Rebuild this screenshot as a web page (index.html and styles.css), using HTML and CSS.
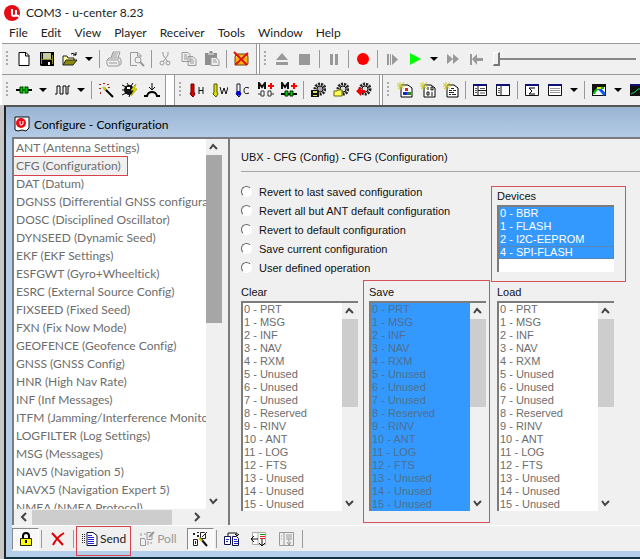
FILE: index.html
```html
<!DOCTYPE html>
<html lang="en">
<head>
    <meta charset="UTF-8">
    <meta name="viewport" content="width=device-width, initial-scale=1.0">
    <title>COM3 - u-center 8.23</title>
    <link rel="stylesheet" href="styles.css">
</head>
<body>
    <header class="titlebar">
        <svg class="icon" viewBox="0 0 16 16"><circle cx="8" cy="8" r="8" fill="#e80c18"/><path d="M8 4v5q0 2 2 2t2-2V5M12 9q0 2 3 2" fill="none" stroke="#fff" stroke-width="2"/></svg>
        <span>COM3 - u-center 8.23</span>
    </header>

    <nav class="menu">
        <a href="#">File</a>
        <a href="#">Edit</a>
        <a href="#">View</a>
        <a href="#">Player</a>
        <a href="#">Receiver</a>
        <a href="#">Tools</a>
        <a href="#">Window</a>
        <a href="#">Help</a>
    </nav>

    <!-- Standard and player toolbars -->
    <div class="toolbars">
        <div class="band">
            <i class="grip"></i>
            <button class="tool" aria-label="New"><svg class="icon" viewBox="0 0 16 16"><path d="M3 1.500h7l3 3v10H3zM9.500 1.500V5H13" fill="#fff" stroke="#000"/></svg></button>
            <button class="tool" aria-label="Save"><svg class="icon" viewBox="0 0 16 16"><path d="M1 1h14v14H2l-1-1z" fill="#000"/><path d="M2 2h1v11H2zM13 4h1v9h-1zM3 8h10v1H3z" fill="#8a8a20"/><path d="M4 2h8v6H4z" fill="#c8c8a0"/><path d="M9 11h2v3H9z" fill="#fff"/></svg></button>
            <button class="tool" aria-label="Open"><svg class="icon" viewBox="0 0 16 16"><path d="M1 14V5h4l1 2h6v2" fill="#ffffa0" stroke="#222"/><path d="M1 14l3-5h11l-4 5z" fill="#8a8a10" stroke="#222"/><path d="M9 3q2-2 5 1M14 1v3h-3" fill="none" stroke="#000"/></svg></button>
            <button class="drop" aria-label="Open recent"></button>
            <i class="sep"></i>
            <button class="tool" aria-label="Print"><svg class="icon" viewBox="0 0 16 16"><path d="M5 7l2-6h7l-2 6M3 7h11l1 2v4l-3 2H2l-1-2V9zM2 9h11M3 12h8M13 14v-4M7 3h5M6 5h5" fill="none" stroke="#999"/></svg></button>
            <button class="tool" aria-label="Print preview"><svg class="icon" viewBox="0 0 16 16"><path d="M8 14.500H1.500v-13H9l3 3V6M8.500 1.500V5H12" fill="none" stroke="#999"/><circle cx="9" cy="9" r="3" fill="none" stroke="#999"/><path d="M11 11l4 4" stroke="#999" stroke-width="2"/></svg></button>
            <i class="sep"></i>
            <button class="tool" aria-label="Cut"><svg class="icon" viewBox="0 0 16 16"><path d="M5 1v3l5 7M10 1v3L5 11" fill="none" stroke="#999"/><circle cx="4" cy="12" r="2" fill="none" stroke="#999"/><circle cx="10" cy="12" r="2" fill="none" stroke="#999"/></svg></button>
            <button class="tool" aria-label="Copy"><svg class="icon" viewBox="0 0 16 16"><path d="M1 1.500h6l2 2v7H1zM7 5.500h5l3 3v6H7zM3 4h3M3 6h3M3 8h3M9 8h3M9 10h4M9 12h4" fill="#eee" stroke="#999"/></svg></button>
            <button class="tool" aria-label="Paste"><svg class="icon" viewBox="0 0 16 16"><path d="M1 2h4l1-2h2l1 2h4v12H1z" fill="#8e8e8e"/><path d="M4 3h6" stroke="#eee"/><path d="M7 6.500h5l3 3v5H7zM9 9h3M9 11h4" fill="#eee" stroke="#999"/></svg></button>
            <i class="sep"></i>
            <button class="tool" aria-label="Empty buffers"><svg class="icon" viewBox="0 0 16 16"><path d="M2 6q0-3 3-3h8q2 0 2 3v6q0 2-2 2H3q-1 0-1-2z" fill="#ffb000" stroke="#642"/><path d="M3 6h11M4 10h9" stroke="#fff080"/><path d="M1 1l13 13M15 2L2 14" stroke="#e01010" stroke-width="2"/></svg></button>
        </div>
        <div class="band band-last">
            <i class="grip"></i>
            <button class="tool" aria-label="Eject"><svg class="icon" viewBox="0 0 16 16"><path d="M8 2l6 7H2zM2 11h12v3H2z" fill="#999"/></svg></button>
            <button class="tool" aria-label="Stop"><svg class="icon" viewBox="0 0 16 16"><path d="M2 3h11v11H2z" fill="#999"/></svg></button>
            <i class="sep"></i>
            <button class="tool" aria-label="Pause"><svg class="icon" viewBox="0 0 16 16"><path d="M4 3h3v11H4zM9 3h3v11H9z" fill="#999"/></svg></button>
            <i class="sep"></i>
            <button class="tool" aria-label="Record"><svg class="icon" viewBox="0 0 16 16"><circle cx="8" cy="8" r="6" fill="#f00"/></svg></button>
            <i class="sep"></i>
            <button class="tool" aria-label="Step"><svg class="icon" viewBox="0 0 16 16"><path d="M3 3h2v11H3zM6 3h1v11H6zM8 3l6 5.500L8 14z" fill="#999"/></svg></button>
            <button class="tool" aria-label="Play"><svg class="icon" viewBox="0 0 16 16"><path d="M3 2l11 6-11 6z" fill="#0f0"/></svg></button>
            <button class="drop" aria-label="Play speed"></button>
            <button class="tool" aria-label="Forward"><svg class="icon" viewBox="0 0 16 16"><path d="M2 3l6 5-6 5zM8 3l6 5-6 5z" fill="#999"/></svg></button>
            <button class="tool" aria-label="Rewind"><svg class="icon" viewBox="0 0 16 16"><path d="M2 3h2v11H2zM4 8l5-5v4h6v3H9v4z" fill="#999"/></svg></button>
            <input class="slider" type="range" min="0" max="100" value="0" aria-label="Position">
        </div>
    </div>

    <!-- Receiver, action and view toolbars -->
    <div class="toolbars">
        <div class="band band-short">
            <i class="grip"></i>
            <button class="tool" aria-label="Connect"><svg class="icon" viewBox="0 0 16 16"><path d="M0 8h16" stroke="#000" stroke-width="2"/><path d="M4 5h3v6H4zM9 5h3v6H9z" fill="#0c0" stroke="#030"/><path d="M8 4v8" stroke="#0c0"/></svg></button>
            <button class="drop" aria-label="Ports"></button>
            <button class="tool" aria-label="Baudrate"><svg class="icon" viewBox="0 0 16 16"><path d="M1 12h2V4h3v8h3V4h3v8h2V4h2" fill="none" stroke="#000"/></svg></button>
            <button class="drop" aria-label="Baudrates"></button>
            <i class="sep"></i>
            <button class="tool" aria-label="Autobaud"><svg class="icon" viewBox="0 0 16 16"><path d="M6 6l9 9" stroke="#000" stroke-width="2"/><path d="M5 5l3 3" stroke="#cc0" stroke-width="2"/><path d="M1 2h2v1H1zM5 1h2v1H5zM9 2h2v1H9zM1 6h2v1H1zM2 10h1v2H2zM10 5h2v1h-2z" fill="#a22"/></svg></button>
            <button class="tool" aria-label="Debug"><svg class="icon" viewBox="0 0 16 16"><path d="M1 3l4 2M1 8h4M1 13l4-2M6 1l2 3M12 1l-2 3M8 15l1-3" stroke="#000"/><ellipse cx="8" cy="8" rx="5" ry="5" fill="#111"/><path d="M6 5h3v2H6z" fill="#fff"/><path d="M15 2l-5 6h3l-3 6 6-7h-3z" fill="#ff0" stroke="#aa0"/></svg></button>
            <button class="tool" aria-label="Antenna"><svg class="icon" viewBox="0 0 16 16"><path d="M8 1v7M5 5l3 3 3-3" fill="none" stroke="#000" stroke-width="1"/><path d="M0 14h3q1-4 5-4t5 4h3" fill="none" stroke="#000" stroke-width="2"/></svg></button>
        </div>
        <div class="band">
            <i class="grip"></i>
            <button class="tool" aria-label="Hotstart"><svg class="icon" viewBox="0 0 16 16"><path d="M2 2h3v8l1 2-2 3-3-3 1-2z" fill="#d00" stroke="#600"/><path d="M10 5v7M14 5v7M10 8.500h4" stroke="#111"/></svg></button>
            <button class="tool" aria-label="Warmstart"><svg class="icon" viewBox="0 0 16 16"><path d="M2 2h3v8l1 2-2 3-3-3 1-2z" fill="#dd0" stroke="#550"/><path d="M8 5l2 7 2-6 2 6 2-7" fill="none" stroke="#111"/></svg></button>
            <button class="tool" aria-label="Coldstart"><svg class="icon" viewBox="0 0 16 16"><path d="M2 2h3v8l1 2-2 3-3-3 1-2z" fill="#fff" stroke="#113"/><path d="M2 9h3l1 3-2 2-3-2z" fill="#00e"/><path d="M14 6q-5-2-5 2.500T14 11" fill="none" stroke="#111"/></svg></button>
            <button class="tool" aria-label="Start without battery"><svg class="icon" viewBox="0 0 16 16"><path d="M1 7V1l3 4 3-4v6" fill="none" stroke="#111" stroke-width="2"/><path d="M10 4h6M13 1v6" stroke="#f00" stroke-width="2"/><path d="M0 12h3M13 12h3M3 9h3v5H3zM10 9h3v5h-3z" fill="#fff" stroke="#333"/></svg></button>
            <button class="tool" aria-label="Start with battery"><svg class="icon" viewBox="0 0 16 16"><path d="M1 7V1l3 4 3-4v6" fill="none" stroke="#111" stroke-width="2"/><path d="M10 4h6M13 1v6" stroke="#f00" stroke-width="2"/><path d="M0 12h16" stroke="#000" stroke-width="2"/><path d="M4 9h3v5H4zM9 9h3v5H9z" fill="#0c0" stroke="#030"/></svg></button>
            <i class="sep"></i>
            <button class="tool" aria-label="Save configuration"><svg class="icon" viewBox="0 0 16 16"><circle cx="10" cy="7" r="5" fill="none" stroke="#222" stroke-width="3" stroke-dasharray="2 1"/><circle cx="10" cy="7" r="3" fill="#aaa" stroke="#111"/><path d="M1 8h8v7H1z" fill="#111"/><path d="M3 9h4v2H3zM3 13h4v1H3z" fill="#dd6"/></svg></button>
            <button class="tool" aria-label="Load configuration"><svg class="icon" viewBox="0 0 16 16"><circle cx="10" cy="7" r="5" fill="none" stroke="#222" stroke-width="3" stroke-dasharray="2 1"/><circle cx="10" cy="7" r="3" fill="#ddd" stroke="#111"/><path d="M1 9h3l1-1h4v6H1z" fill="#ff5" stroke="#660"/></svg></button>
            <button class="tool" aria-label="Revert configuration"><svg class="icon" viewBox="0 0 16 16"><circle cx="9" cy="7" r="5" fill="none" stroke="#222" stroke-width="3" stroke-dasharray="2 1"/><circle cx="9" cy="7" r="3" fill="#ddd" stroke="#111"/><path d="M0 9l5-4v3h4v3H5v3z" fill="#e00"/></svg></button>
        </div>
        <div class="band band-last">
            <i class="grip"></i>
            <button class="tool" aria-label="Packet console"><svg class="icon" viewBox="0 0 16 16"><path d="M4 3h7l4 3v9H4z" fill="#fff" stroke="#000"/><path d="M0 1l7 6M7 0L1 7M3 0v8M0 4h8" stroke="#cc3"/><path d="M8 6h3v3H8z" fill="#d22"/><path d="M6 10h4v3H6z" fill="#22c"/><path d="M10 10h4v3h-4z" fill="#282"/></svg></button>
            <button class="tool" aria-label="Binary console"><svg class="icon" viewBox="0 0 16 16"><path d="M4 3h7l4 3v9H4z" fill="#fff" stroke="#000"/><path d="M0 1l7 6M7 0L1 7M3 0v8M0 4h8" stroke="#cc3"/><path d="M8 5v3M11 5h2v3h-2zM7 10h2v3H7zM12 10v4" fill="none" stroke="#111"/></svg></button>
            <button class="tool" aria-label="Text console"><svg class="icon" viewBox="0 0 16 16"><path d="M4 3h7l4 3v9H4z" fill="#fff" stroke="#000"/><path d="M0 1l7 6M7 0L1 7M3 0v8M0 4h8" stroke="#cc3"/><path d="M8 6.500h3M6 8.500h3M10 8.500h3M6 10.500h5M6 12.500h2M9 12.500h4" stroke="#222"/></svg></button>
            <i class="sep"></i>
            <button class="tool" aria-label="Messages view"><svg class="icon" viewBox="0 0 16 16"><path d="M1.500 2.500h13v11h-13zM6 3v10M6 8.500h8" fill="#fff" stroke="#111"/><path d="M1 2h14v2H1z" fill="#117"/><path d="M3 6.500h2M3 8.500h2M3 10.500h2M8 6.500h5M8 11h5" stroke="#555"/></svg></button>
            <button class="tool" aria-label="Configuration view"><svg class="icon" viewBox="0 0 16 16"><path d="M1.500 2.500h13v11h-13zM6 3v10" fill="#fff" stroke="#111"/><path d="M1 2h14v2H1z" fill="#117"/><path d="M3 6.500h2M3 8.500h2M3 10.500h2" stroke="#555"/></svg></button>
            <i class="sep"></i>
            <button class="tool" aria-label="Statistic view"><svg class="icon" viewBox="0 0 16 16"><path d="M1.500 2.500h13v11h-13z" fill="#fff" stroke="#111"/><path d="M1 2h14v2H1z" fill="#117"/><path d="M11 6H5l3 3-3 3h6" fill="none" stroke="#000" stroke-width="1"/></svg></button>
            <button class="tool" aria-label="Table view"><svg class="icon" viewBox="0 0 16 16"><path d="M1.500 2.500h13v11h-13z" fill="#fff" stroke="#111"/><path d="M1 2h14v2H1z" fill="#117"/><path d="M3 6.500h10M3 8.500h10M3 10.500h10" stroke="#999"/></svg></button>
            <button class="drop" aria-label="Tables"></button>
            <i class="sep"></i>
            <button class="tool" aria-label="Chart view"><svg class="icon" viewBox="0 0 16 16"><path d="M1 2h14v12H1z" fill="#111"/><path d="M2 13q2-9 12-8v8z" fill="#fff"/><path d="M3 12Q5 5 13 6" fill="none" stroke="#0b0" stroke-width="2"/><path d="M8 6l6 7" stroke="#15e" stroke-width="3"/><path d="M6 5h4v2H6z" fill="#ee0"/></svg></button>
            <button class="drop" aria-label="Charts"></button>
            <button class="tool" aria-label="Histogram view"><svg class="icon" viewBox="0 0 16 16"><path d="M1 2h14v12H1z" fill="#111"/><path d="M1 2h14v2H1z" fill="#117"/><path d="M2 12l4-2 3-3h5" fill="none" stroke="#0d4"/></svg></button>
        </div>
    </div>

    <main class="workspace">
        <section class="window">
            <h1 class="window-title">
                <svg class="icon" viewBox="0 0 16 16"><path d="M1 1h14v11l-3 3-4-1-4 1-3-1z" fill="#fff" stroke="#111"/><circle cx="7" cy="7" r="5" fill="#e80c18"/><path d="M6 5v3q0 1 1 1t2-1V5" fill="none" stroke="#fff"/></svg>
                <span>Configure - Configuration</span>
            </h1>

            <div class="panes">
                <div class="tree">
                    <div class="tree-top">
                        <ul class="tree-list">
                            <li><button>ANT (Antenna Settings)</button></li>
                            <li><button class="current marked">CFG (Configuration)</button></li>
                            <li><button>DAT (Datum)</button></li>
                            <li><button>DGNSS (Differential GNSS configuration)</button></li>
                            <li><button>DOSC (Disciplined Oscillator)</button></li>
                            <li><button>DYNSEED (Dynamic Seed)</button></li>
                            <li><button>EKF (EKF Settings)</button></li>
                            <li><button>ESFGWT (Gyro+Wheeltick)</button></li>
                            <li><button>ESRC (External Source Config)</button></li>
                            <li><button>FIXSEED (Fixed Seed)</button></li>
                            <li><button>FXN (Fix Now Mode)</button></li>
                            <li><button>GEOFENCE (Geofence Config)</button></li>
                            <li><button>GNSS (GNSS Config)</button></li>
                            <li><button>HNR (High Nav Rate)</button></li>
                            <li><button>INF (Inf Messages)</button></li>
                            <li><button>ITFM (Jamming/Interference Monitor)</button></li>
                            <li><button>LOGFILTER (Log Settings)</button></li>
                            <li><button>MSG (Messages)</button></li>
                            <li><button>NAV5 (Navigation 5)</button></li>
                            <li><button>NAVX5 (Navigation Expert 5)</button></li>
                            <li><button>NMEA (NMEA Protocol)</button></li>
                        </ul>
                        <div class="scroll scroll-tree">
                            <svg viewBox="0 0 15 16"><path d="M4 10l3-4 4 4" /></svg>
                            <i class="thumb"></i>
                            <svg viewBox="0 0 15 16"><path d="M4 6l3 4 4-4" /></svg>
                        </div>
                    </div>
                    <div class="scroll-h">
                        <svg viewBox="0 0 18 16"><path d="M12 4l-4 4 4 4" /></svg>
                        <i class="thumb"></i>
                        <svg viewBox="0 0 18 16"><path d="M7 4l4 4-4 4" /></svg>
                    </div>
                </div>

                <form class="settings">
                    <h2>UBX - CFG (Config) - CFG (Configuration)</h2>
                    <div class="fields">
                        <div class="choices">
                            <label><input type="radio" name="action">Revert to last saved configuration</label>
                            <label><input type="radio" name="action">Revert all but ANT default configuration</label>
                            <label><input type="radio" name="action">Revert to default configuration</label>
                            <label><input type="radio" name="action">Save current configuration</label>
                            <label><input type="radio" name="action">User defined operation</label>
                        </div>
                        <div class="field devices marked">
                            <label for="devices">Devices</label>
                            <div class="listbox">
                                <select id="devices" multiple size="5">
                                    <option selected>0 - BBR</option>
                                    <option selected>1 - FLASH</option>
                                    <option selected>2 - I2C-EEPROM</option>
                                    <option selected class="focused">4 - SPI-FLASH</option>
                                </select>
                            </div>
                        </div>
                        <div class="field">
                            <label for="clear">Clear</label>
                            <div class="listbox">
                                <select id="clear" class="sections" multiple size="16">
                                    <option>0 - PRT</option>
                                    <option>1 - MSG</option>
                                    <option>2 - INF</option>
                                    <option>3 - NAV</option>
                                    <option>4 - RXM</option>
                                    <option>5 - Unused</option>
                                    <option>6 - Unused</option>
                                    <option>7 - Unused</option>
                                    <option>8 - Reserved</option>
                                    <option>9 - RINV</option>
                                    <option>10 - ANT</option>
                                    <option>11 - LOG</option>
                                    <option>12 - FTS</option>
                                    <option>13 - Unused</option>
                                    <option>14 - Unused</option>
                                    <option>15 - Unused</option>
                                </select>
                                <div class="scroll">
                                    <svg viewBox="0 0 15 16"><path d="M4 10l3-4 4 4" /></svg>
                                    <i class="thumb"></i>
                                    <svg viewBox="0 0 15 16"><path d="M4 6l3 4 4-4" /></svg>
                                </div>
                            </div>
                        </div>
                        <div class="field marked">
                            <label for="save">Save</label>
                            <div class="listbox">
                                <select id="save" class="sections" multiple size="16">
                                    <option selected>0 - PRT</option>
                                    <option selected>1 - MSG</option>
                                    <option selected>2 - INF</option>
                                    <option selected>3 - NAV</option>
                                    <option selected>4 - RXM</option>
                                    <option selected>5 - Unused</option>
                                    <option selected>6 - Unused</option>
                                    <option selected>7 - Unused</option>
                                    <option selected>8 - Reserved</option>
                                    <option selected>9 - RINV</option>
                                    <option selected>10 - ANT</option>
                                    <option selected>11 - LOG</option>
                                    <option selected>12 - FTS</option>
                                    <option selected>13 - Unused</option>
                                    <option selected>14 - Unused</option>
                                    <option selected>15 - Unused</option>
                                </select>
                                <div class="scroll">
                                    <svg viewBox="0 0 15 16"><path d="M4 10l3-4 4 4" /></svg>
                                    <i class="thumb"></i>
                                    <svg viewBox="0 0 15 16"><path d="M4 6l3 4 4-4" /></svg>
                                </div>
                            </div>
                        </div>
                        <div class="field">
                            <label for="load">Load</label>
                            <div class="listbox">
                                <select id="load" class="sections" multiple size="16">
                                    <option>0 - PRT</option>
                                    <option>1 - MSG</option>
                                    <option>2 - INF</option>
                                    <option>3 - NAV</option>
                                    <option>4 - RXM</option>
                                    <option>5 - Unused</option>
                                    <option>6 - Unused</option>
                                    <option>7 - Unused</option>
                                    <option>8 - Reserved</option>
                                    <option>9 - RINV</option>
                                    <option>10 - ANT</option>
                                    <option>11 - LOG</option>
                                    <option>12 - FTS</option>
                                    <option>13 - Unused</option>
                                    <option>14 - Unused</option>
                                    <option>15 - Unused</option>
                                </select>
                                <div class="scroll">
                                    <svg viewBox="0 0 15 16"><path d="M4 10l3-4 4 4" /></svg>
                                    <i class="thumb"></i>
                                    <svg viewBox="0 0 15 16"><path d="M4 6l3 4 4-4" /></svg>
                                </div>
                            </div>
                        </div>
                    </div>
                </form>
            </div>

            <footer class="actions">
                <button class="tool pressed" aria-label="Lock"><svg class="icon" viewBox="0 0 16 16"><path d="M5 8V5q0-3 3-3t3 3v3" fill="none" stroke="#000" stroke-width="2"/><path d="M2.500 7.500h11v7h-11z" fill="#ff0" stroke="#220"/><path d="M8 9v3" stroke="#000" stroke-width="2"/></svg></button>
                <i class="sep"></i>
                <button class="tool" aria-label="Close"><svg class="icon" viewBox="0 0 16 16"><path d="M2 2l11 12M14 2Q7 6 3 14" fill="none" stroke="#d00" stroke-width="2"/></svg></button>
                <i class="sep"></i>
                <button class="send"><svg class="icon" viewBox="0 0 16 16"><path d="M0 3.500h4M0 5.500h4M0 7.500h4M0 9.500h4M0 11.500h4" stroke="#222" stroke-dasharray="1 1"/><path d="M5 1.500h6l4 3v10H5z" fill="#fff" stroke="#113"/><path d="M6 4.500h4M6 6.500h6M6 8.500h6M6 10.500h6M6 12.500h6" stroke="#22c"/></svg>Send</button>
                <button class="poll" disabled><svg class="icon" viewBox="0 0 16 16"><path d="M1.500 7.500h4l1 2v5h-5zM8 1.500h4l1 2v5H8zM2 2v3M5 3h2M11 12h2M9 10v4" fill="none" stroke="#999"/><path d="M10 6l5-5" stroke="#999" stroke-width="2"/></svg>Poll</button>
                <button class="tool pressed" aria-label="Auto poll"><svg class="icon" viewBox="0 0 16 16"><path d="M9 8l6 7" stroke="#111" stroke-width="2"/><path d="M1.500 8.500h4v6h-4zM8.500 1.500h4l1 1v5h-5z" fill="#fff" stroke="#222"/><path d="M1 2h2v2H1zM5 1h2v1H5zM5 4h2v2H5zM3 10h1v3H3z" fill="#222"/><path d="M10 6l5-5" stroke="#222"/><path d="M7 7l3 3" stroke="#cc0" stroke-width="2"/></svg></button>
                <i class="sep"></i>
                <button class="tool" aria-label="Copy message"><svg class="icon" viewBox="0 0 16 16"><path d="M0.500 5.500h6v8h-6zM8.500 5.500h4l2 2v7h-6z" fill="#fff" stroke="#115"/><path d="M4 5V2h9v3M11 3l2 2 2-2" fill="none" stroke="#111"/><path d="M2 8.500h3M2 10.500h2M10 8.500h3M10 10.500h4M10 12.500h4" stroke="#22c"/></svg></button>
                <button class="tool" aria-label="Arrange columns"><svg class="icon" viewBox="0 0 16 16"><path d="M1.500 1.500h13v12h-13zM7 2v11" fill="#fff" stroke="#aaa"/><path d="M9 3.500h5" stroke="#090"/><path d="M9 5.500h5M9 7.500h5" stroke="#d22"/><path d="M0 8h7M3 5L0 8l3 3M11 8v7M8 12l3 3 3-3" fill="none" stroke="#111" stroke-width="1"/></svg></button>
                <button class="tool" aria-label="Expand"><svg class="icon" viewBox="0 0 16 16"><path d="M1.500 1.500h14v13h-14zM6 2v12M8 4h6M8 6h6M8 8h6M11 8v6M9 11l2 3 2-3M3 5h1M3 8h1" fill="none" stroke="#999"/></svg></button>
                <i class="sep"></i>
            </footer>
        </section>
    </main>
</body>
</html>
```
FILE: styles.css
```css
* {
    box-sizing: border-box;
}

body {
    margin: 0;
    height: 100vh;
    display: flex;
    flex-direction: column;
    overflow: hidden;
    background: #fff;
    color: #222;
    font-family: Lato, "Open Sans", sans-serif;
    font-size: 12px;
    font-variant-ligatures: none;
}

button {
    border: 0;
    padding: 0;
    background: none;
    font: inherit;
    font-variant-ligatures: none;
    color: inherit;
}

.icon {
    width: 16px;
    height: 16px;
    flex: none;
}

.titlebar {
    display: flex;
    align-items: center;
    gap: 6px;
    height: 23px;
    padding: 2px 4px 0;
}

.menu {
    display: flex;
    gap: 13px;
    height: 20px;
    padding-left: 9px;
    line-height: 20px;
}

.menu a {
    color: #222;
    text-decoration: none;
}

/* Toolbars */
.toolbars {
    display: flex;
    height: 31px;
    margin-left: 2px;
    border-top: 1px solid #999;
    overflow: hidden;
}

.band {
    display: flex;
    align-items: center;
    flex: none;
    padding-right: 4px;
    background: #f0f0f0;
    border-right: 1px solid #999;
    margin-right: 2px;
}

.band + .band {
    border-left: 1px solid #999;
}

.band-short {
    margin-right: 8px;
    padding-right: 2px;
}

.band-last {
    flex: 1 0 0;
    border-right: 0;
    margin-right: 0;
}

.grip {
    width: 2px;
    height: 16px;
    margin: 0 4px;
    background: repeating-linear-gradient(#aaa 0 2px, #f0f0f0 2px 4px);
}

.tool {
    display: flex;
    align-items: center;
    justify-content: center;
    flex: none;
    width: 23px;
    height: 22px;
}

.drop {
    flex: none;
    width: 15px;
    height: 22px;
}

.drop::before {
    content: "";
    display: block;
    width: 0;
    margin: 0 auto;
    border: 4px solid transparent;
    border-top-color: #000;
    border-bottom: 0;
}

.sep {
    flex: none;
    width: 1px;
    height: 18px;
    margin: 0 2px 0 3px;
    background: #999;
}

.slider {
    appearance: none;
    flex: 1;
    min-width: 0;
    height: 16px;
    margin: 0 0 0 6px;
    background: linear-gradient(#888, #888) 0 7px / 100% 2px no-repeat;
}

.slider::-webkit-slider-thumb {
    appearance: none;
    width: 7px;
    height: 14px;
    background: #f0f0f0;
    border: 1px solid #fff;
    border-right: 2px solid #777;
    border-bottom: 2px solid #777;
}

/* Configure window */
.workspace {
    flex: 1;
    min-height: 0;
    display: flex;
    padding-left: 4px;
    background: #c8c8c8;
}

.window {
    flex: 1;
    min-width: 0;
    display: flex;
    flex-direction: column;
    padding: 0 0 6px 6px;
    background: #b5cfea;
    border-top: 2px solid #555;
    border-left: 2px solid #222;
    border-bottom: 2px solid #123440;
}

.window-title {
    display: flex;
    align-items: center;
    gap: 4px;
    height: 30px;
    margin: 0 0 0 -6px;
    padding: 4px 8px 0;
    background: linear-gradient(#98b4d2, #b5cbe6);
    font-size: 12px;
    font-weight: normal;
    color: #000;
}

.panes {
    flex: 1;
    min-height: 0;
    display: flex;
    gap: 6px;
    background: #f0f0f0;
    border-top: 2px solid #7a7a80;
}

.tree {
    display: flex;
    flex-direction: column;
    flex: none;
    width: 210px;
    border-left: 2px solid #7c7c7c;
}

.tree-top {
    flex: 1;
    min-height: 0;
    display: flex;
}

.tree-list {
    flex: 1;
    min-width: 0;
    margin: 0;
    padding: 0;
    list-style: none;
    overflow: hidden;
    background: #fff;
    color: #6d6d6d;
    white-space: nowrap;
}

.tree-list li {
    height: 18px;
}

.tree-list button {
    display: block;
    height: 18px;
    padding: 0 2px;
    line-height: 18px;
}

.tree-list .current {
    background: #f0f0f0;
}

.tree-list .marked {
    padding-right: 6px;
    outline: 1px solid #d8404c;
}

/* Scrollbars */
.scroll {
    flex: none;
    width: 16px;
    display: flex;
    flex-direction: column;
    background: #f0f0f0;
}

.scroll svg {
    width: 15px;
    height: 16px;
}

.scroll svg:last-child {
    margin-top: auto;
}

.scroll path,
.scroll-h path {
    fill: none;
    stroke: #444;
    stroke-width: 2;
}

.scroll .thumb {
    height: 88px;
    background: #cdcdcd;
}

.scroll-tree .thumb {
    height: 168px;
    background: #a6a6a6;
}

.scroll-h {
    display: flex;
    align-items: center;
    height: 16px;
    padding-right: 16px;
    background: #f0f0f0;
}

.scroll-h svg {
    width: 18px;
    height: 16px;
}

.scroll-h svg:last-child {
    margin-left: auto;
}

.scroll-h .thumb {
    width: 140px;
    height: 15px;
    background: #cdcdcd;
}

/* Settings form */
.settings {
    flex: 1;
    min-width: 0;
    padding: 10px 0 0 11px;
    border-left: 2px solid #7c7c7c;
    font-family: "Liberation Sans", Arial, sans-serif;
    font-size: 11px;
    color: #111;
}

.settings h2 {
    margin: 0;
    padding-bottom: 6px;
    border-bottom: 1px solid #a5a5a5;
    font-size: 11px;
    font-weight: normal;
    line-height: 16px;
}

.fields {
    display: grid;
    grid-template-columns: repeat(3, 117px);
    column-gap: 11px;
    row-gap: 8px;
    padding-top: 10px;
}

.choices {
    grid-column: span 2;
}

.choices label {
    display: flex;
    align-items: center;
    gap: 7px;
    height: 19px;
}

.choices input {
    appearance: none;
    width: 11px;
    height: 11px;
    margin: 0;
    background: #fff;
    border: 1px solid #fff;
    border-top-color: #666;
    border-left-color: #666;
    border-radius: 50%;
}

.field {
    position: relative;
}

.field > label {
    display: block;
    height: 16px;
    line-height: 14px;
}

.devices {
    padding-top: 7px;
}

.field.marked::after {
    content: "";
    position: absolute;
    inset: -5px -4px -12px -6px;
    border: 1px solid #d8505a;
    pointer-events: none;
}

.devices.marked::after {
    inset: 4px -12px -5px -6px;
}

.listbox {
    display: flex;
    background: #fff;
    border-top: 2px solid #7c7c7c;
    border-left: 2px solid #7c7c7c;
}

select {
    flex: 1;
    min-width: 0;
    height: 65px;
    margin: 0;
    padding: 0;
    border: 0;
    border-radius: 0;
    outline: 0;
    overflow: hidden;
    background: #fff;
    font: inherit;
    scrollbar-width: none;
}

.sections {
    height: 208px;
}

option {
    height: 13px;
    min-height: 13px;
    padding: 0 1px;
    line-height: 13px;
    color: #6d6d6d;
}

option:checked {
    background: linear-gradient(#3399ff, #3399ff);
    color: #4f6f90;
}

#devices option:checked {
    color: #fff;
}

#devices .focused {
    outline: 1px solid #5a86b0;
    outline-offset: -1px;
}

/* Bottom toolbar */
.actions {
    display: flex;
    align-items: center;
    height: 26px;
    background: #f0f0f0;
    border-top: 1px solid #fff;
}

.actions .sep {
    margin: 0 2px;
}

.actions .tool {
    width: 27px;
}

.pressed {
    background: #f8f8f8;
    border: 1px solid #fff;
    border-top-color: #888;
    border-left-color: #888;
}

.send,
.poll {
    position: relative;
    display: flex;
    align-items: center;
    gap: 2px;
    height: 24px;
    padding: 0 5px 0 6px;
}

.send::after {
    content: "";
    position: absolute;
    inset: -1px 0 -5px;
    border: 1px solid #d8404c;
}

.poll {
    margin: 0 5px 0 2px;
    color: #999;
}
```
